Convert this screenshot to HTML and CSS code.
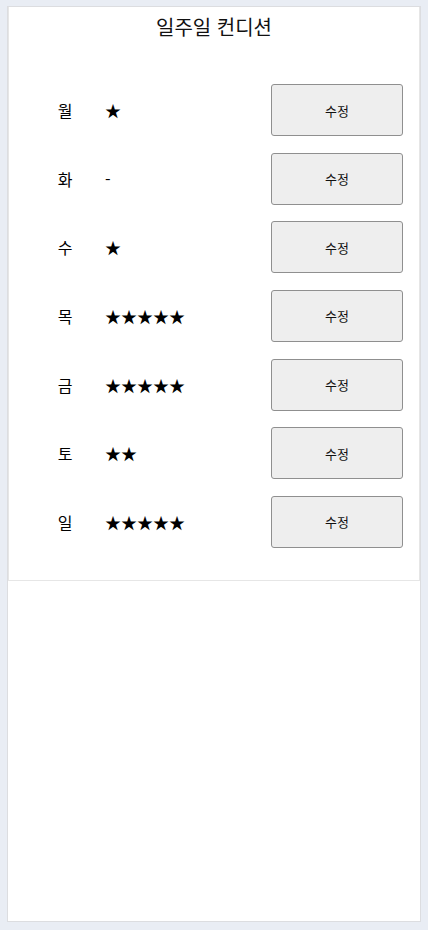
FILE: index.html
```html
<!DOCTYPE html>
<html lang="ko">
<head>
<meta charset="utf-8">
<title>일주일 컨디션</title>
<link rel="stylesheet" href="styles.css">
</head>
<body>
<div class="frame">
  <section class="card">
    <h1 class="title">일주일 컨디션</h1>
    <div class="rows">
      <div class="row"><span class="day">월</span><span class="stars">★</span><button class="edit">수정</button></div>
      <div class="row"><span class="day">화</span><span class="stars">-</span><button class="edit">수정</button></div>
      <div class="row"><span class="day">수</span><span class="stars">★</span><button class="edit">수정</button></div>
      <div class="row"><span class="day">목</span><span class="stars">★★★★★</span><button class="edit">수정</button></div>
      <div class="row"><span class="day">금</span><span class="stars">★★★★★</span><button class="edit">수정</button></div>
      <div class="row"><span class="day">토</span><span class="stars">★★</span><button class="edit">수정</button></div>
      <div class="row"><span class="day">일</span><span class="stars">★★★★★</span><button class="edit">수정</button></div>
    </div>
  </section>
</div>
</body>
</html>
```
FILE: styles.css
```css
* { box-sizing: border-box; }
html, body { margin: 0; padding: 0; }
body {
  background: #e9edf4;
  font-family: "Noto Sans CJK KR", "Noto Sans", sans-serif;
  color: #000;
  padding: 6px 7px 8px;
}
.frame {
  height: 916px;
  background: #fff;
  border: 1px solid #dcdde0;
}
.card {
  border: 1px solid #e6e6e6;
  border-top: none;
  padding: 6px 0 32px;
}
.title {
  margin: 0;
  font-size: 20px;
  font-weight: 400;
  line-height: 28px;
  text-align: center;
  color: #111;
}
.rows {
  margin-top: 43px;
  display: flex;
  flex-direction: column;
  gap: 16.67px;
}
.row {
  display: flex;
  align-items: center;
  height: 52px;
  padding-left: 35px;
  padding-right: 16px;
}
.day {
  width: 42px;
  text-align: center;
  font-size: 16px;
}
.stars {
  flex: 1;
  padding-left: 19px;
  font-size: 16px;
}
.edit {
  width: 132px;
  height: 52px;
  background: #eeeeee;
  border: 1px solid #8f8f8f;
  border-radius: 3px;
  font-family: "Noto Sans CJK KR", sans-serif;
  font-size: 13px;
  color: #111;
  padding: 0;
}
```
